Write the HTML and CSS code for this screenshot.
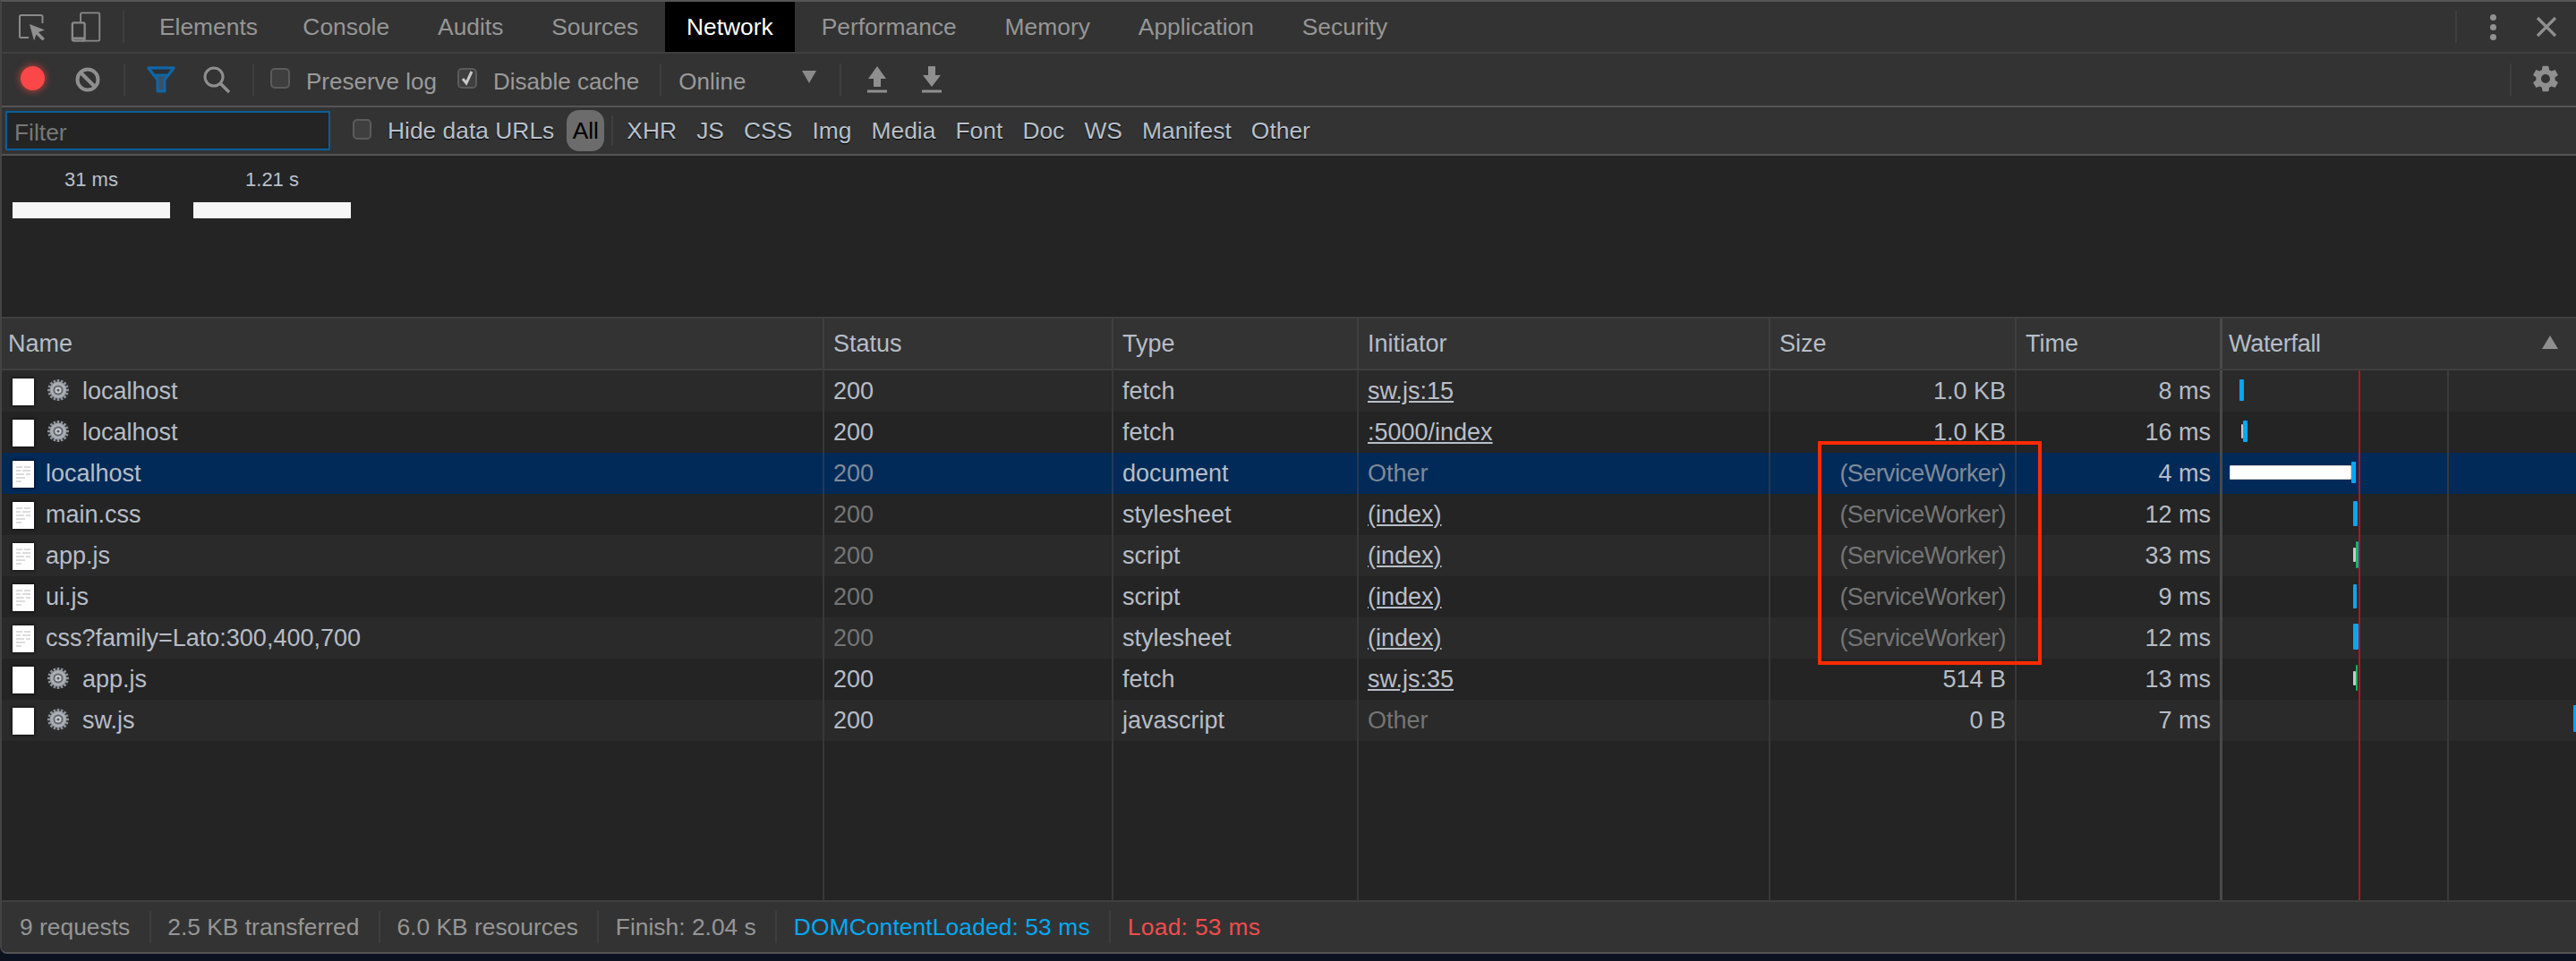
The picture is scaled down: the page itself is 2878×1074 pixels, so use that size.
FILE: index.html
```html
<!DOCTYPE html>
<html lang="en">
<head>
<meta charset="utf-8">
<title>Network</title>
<link rel="stylesheet" href="styles.css">
</head>
<body>
<svg class="defs" width="0" height="0" aria-hidden="true">
  <defs>
    <radialGradient id="metal" cx="50%" cy="35%" r="70%">
      <stop offset="0" stop-color="#d8dde2"/>
      <stop offset="1" stop-color="#6f757b"/>
    </radialGradient>
    <symbol id="gearlet" viewBox="0 0 26 26">
      <g fill="url(#metal)">
        <circle cx="13" cy="13" r="9.4"/>
        <g stroke="#8d9399" stroke-width="2.6">
          <path d="M13 1v24M1 13h24M4.5 4.5l17 17M21.5 4.5l-17 17"/>
          <path d="M8.4 2l9.2 22M17.600 2L8.400 24M2 8.400l22 9.200M24 8.400L2 17.600"/>
        </g>
        <circle cx="13" cy="13" r="8.6" fill="#a9afb5"/>
        <circle cx="13" cy="13" r="5.6" fill="#63686d"/>
        <circle cx="13" cy="13" r="3.6" fill="#c9cdd1"/>
        <circle cx="13" cy="13" r="1.6" fill="#55595d"/>
      </g>
    </symbol>
    <symbol id="doclines" viewBox="0 0 24 30">
      <path d="M4 7h7M13 7h7M4 11h5M11 11h9M4 15h9M15 15h5M4 19h10M4 23h6" stroke="#dcdcdc" stroke-width="2" fill="none"/>
    </symbol>
  </defs>
</svg>
<main class="devtools">
  <nav class="tabbar">
    <span class="tb-icon inspect">
      <svg width="30" height="30" viewBox="0 0 30 30"><path d="M11 27H2.500A1.500 1.500 0 0 1 1 25.500V3.500A1.500 1.500 0 0 1 2.500 2H25a1.500 1.500 0 0 1 1.500 1.500V11" fill="none" stroke="#8a8a8a" stroke-width="2"/><path d="M12 12l17 6.500-7 2.500 7 7-2.500 2.500-7-7-2.500 7z" fill="#8f8f8f"/></svg>
    </span>
    <span class="tb-icon device">
      <svg width="35" height="36" viewBox="0 0 38 38"><path d="M12 13V3.500A1.500 1.500 0 0 1 13.500 2h20A1.500 1.500 0 0 1 35 3.500v31a1.500 1.500 0 0 1-1.500 1.500H14" fill="none" stroke="#8a8a8a" stroke-width="2"/><rect x="2" y="14" width="15" height="22" rx="2" fill="none" stroke="#8a8a8a" stroke-width="2.500"/><path d="M2 33h15" stroke="#8a8a8a" stroke-width="3"/></svg>
    </span>
    <span class="sep tab-sep"></span>
    <a class="tab tab-first">Elements</a>
    <a class="tab">Console</a>
    <a class="tab">Audits</a>
    <a class="tab">Sources</a>
    <a class="tab active">Network</a>
    <a class="tab">Performance</a>
    <a class="tab">Memory</a>
    <a class="tab">Application</a>
    <a class="tab">Security</a>
    <span class="sep tab-end-sep"></span>
    <span class="dots"><i></i><i></i><i></i></span>
    <svg class="close" width="24" height="24" viewBox="0 0 24 24"><path d="M2 2l20 20M22 2L2 22" stroke="#8f8f8f" stroke-width="3.200"/></svg>
  </nav>

  <section class="toolbar">
    <span class="btn"><span class="record"></span></span>
    <span class="btn">
      <svg width="30" height="30" viewBox="0 0 30 30"><circle cx="15" cy="15" r="11.500" fill="none" stroke="#8f8f8f" stroke-width="4"/><path d="M7 7l16 16" stroke="#8f8f8f" stroke-width="4"/></svg>
    </span>
    <span class="sep"></span>
    <span class="btn">
      <svg width="32" height="30" viewBox="0 0 32 30"><path d="M2 2h28L20 15v13h-8V15z" fill="#3c4f60" stroke="#0f66a8" stroke-width="3" stroke-linejoin="round"/><path d="M2 2h28l-6 8H8z" fill="#2c2f33" stroke="#0f66a8" stroke-width="3" stroke-linejoin="round"/></svg>
    </span>
    <span class="btn">
      <svg width="32" height="32" viewBox="0 0 32 32"><circle cx="13" cy="13" r="10" fill="none" stroke="#8f8f8f" stroke-width="3"/><path d="M20 20l10 10" stroke="#8f8f8f" stroke-width="3.500"/></svg>
    </span>
    <span class="sep"></span>
    <label class="check first-check"><span class="box"></span>Preserve log</label>
    <label class="check"><span class="box"><svg width="16" height="18" viewBox="0 0 16 18"><path d="M3 10l4 5 6-13" fill="none" stroke="#c8c8c8" stroke-width="3"/></svg></span>Disable cache</label>
    <span class="sep"></span>
    <span class="select">Online<span class="caret"></span></span>
    <span class="sep"></span>
    <span class="btn small">
      <svg width="22" height="30" viewBox="0 0 22 30"><path d="M11 0l10 14h-6v9H7v-9H1z" fill="#8f8f8f"/><path d="M0 28h22" stroke="#8f8f8f" stroke-width="3"/></svg>
    </span>
    <span class="btn small">
      <svg width="22" height="30" viewBox="0 0 22 30"><path d="M7 0h8v10h6L11 23 1 10h6z" fill="#8f8f8f"/><path d="M0 28h22" stroke="#8f8f8f" stroke-width="3"/></svg>
    </span>
    <span class="toolbar-end">
      <span class="sep"></span>
      <svg class="gear" width="34" height="34" viewBox="0 0 24 24"><path fill="#8f8f8f" d="M19.430 12.980c.04-.32.070-.640.070-.980s-.030-.660-.070-.980l2.110-1.650c.190-.150.240-.420.120-.640l-2-3.460c-.120-.220-.390-.300-.610-.220l-2.490 1c-.520-.400-1.080-.730-1.690-.980l-.380-2.650A.488.488 0 0 0 14 2h-4c-.250 0-.460.180-.490.420l-.380 2.650c-.610.250-1.170.590-1.690.980l-2.490-1c-.230-.090-.490 0-.610.220l-2 3.460c-.130.220-.070.490.120.640l2.110 1.650c-.040.320-.070.650-.070.980s.030.660.070.980l-2.110 1.650c-.190.150-.240.420-.120.640l2 3.460c.120.220.390.300.610.220l2.490-1c.520.400 1.080.730 1.690.980l.380 2.650c.030.240.240.420.490.420h4c.250 0 .460-.180.490-.420l.380-2.650c.610-.250 1.170-.590 1.690-.980l2.490 1c.230.090.490 0 .610-.220l2-3.460c.120-.220.070-.490-.120-.640l-2.110-1.650zM12 15.500c-1.930 0-3.500-1.570-3.500-3.500s1.570-3.500 3.500-3.500 3.500 1.570 3.500 3.500-1.570 3.500-3.500 3.500z"/></svg>
    </span>
  </section>

  <section class="filterbar">
    <input class="filter-input" type="text" placeholder="Filter">
    <label class="check hide-data"><span class="box"></span>Hide data URLs</label>
    <span class="pill">All</span>
    <span class="sep pill-sep"></span>
    <span class="ftype">XHR</span>
    <span class="ftype">JS</span>
    <span class="ftype">CSS</span>
    <span class="ftype">Img</span>
    <span class="ftype">Media</span>
    <span class="ftype">Font</span>
    <span class="ftype">Doc</span>
    <span class="ftype">WS</span>
    <span class="ftype">Manifest</span>
    <span class="ftype">Other</span>
  </section>

  <section class="overview">
    <div class="ov-item"><span>31 ms</span><i></i></div>
    <div class="ov-item"><span>1.21 s</span><i></i></div>
  </section>

  <section class="table">
    <div class="row head">
      <div class="cell">Name</div>
      <div class="cell">Status</div>
      <div class="cell">Type</div>
      <div class="cell">Initiator</div>
      <div class="cell">Size</div>
      <div class="cell">Time</div>
      <div class="cell wf-head">Waterfall<span class="sort"></span></div>
    </div>
    <div class="body">
      <div class="row odd">
        <div class="cell"><span class="doc"></span><svg class="cog" width="26" height="26"><use href="#gearlet"/></svg>localhost</div>
        <div class="cell">200</div><div class="cell">fetch</div><div class="cell"><u>sw.js:15</u></div>
        <div class="cell num">1.0 KB</div><div class="cell num">8 ms</div>
        <div class="cell wf"><b class="bar blue" style="left:19px;width:5px;top:10px;height:24px"></b></div>
      </div>
      <div class="row">
        <div class="cell"><span class="doc"></span><svg class="cog" width="26" height="26"><use href="#gearlet"/></svg>localhost</div>
        <div class="cell">200</div><div class="cell">fetch</div><div class="cell"><u>:5000/index</u></div>
        <div class="cell num">1.0 KB</div><div class="cell num">16 ms</div>
        <div class="cell wf"><b class="bar grey" style="left:21px;width:2px;top:14px;height:16px"></b><b class="bar blue" style="left:23px;width:5px;top:10px;height:24px"></b></div>
      </div>
      <div class="row selected">
        <div class="cell"><span class="doc lines"><svg width="24" height="30"><use href="#doclines"/></svg></span>localhost</div>
        <div class="cell dim">200</div><div class="cell">document</div><div class="cell dim">Other</div>
        <div class="cell num dim">(ServiceWorker)</div><div class="cell num">4 ms</div>
        <div class="cell wf"><b class="bar white" style="left:8px;width:136px;top:14px;height:16px"></b><b class="bar blue" style="left:144px;width:5px;top:10px;height:24px"></b></div>
      </div>
      <div class="row">
        <div class="cell"><span class="doc lines"><svg width="24" height="30"><use href="#doclines"/></svg></span>main.css</div>
        <div class="cell dim">200</div><div class="cell">stylesheet</div><div class="cell"><u>(index)</u></div>
        <div class="cell num dim">(ServiceWorker)</div><div class="cell num">12 ms</div>
        <div class="cell wf"><b class="bar blue" style="left:146px;width:5px;top:8px;height:28px"></b></div>
      </div>
      <div class="row odd">
        <div class="cell"><span class="doc lines"><svg width="24" height="30"><use href="#doclines"/></svg></span>app.js</div>
        <div class="cell dim">200</div><div class="cell">script</div><div class="cell"><u>(index)</u></div>
        <div class="cell num dim">(ServiceWorker)</div><div class="cell num">33 ms</div>
        <div class="cell wf"><b class="bar grey" style="left:146px;width:3px;top:14px;height:16px"></b><b class="bar green" style="left:149px;width:2px;top:7px;height:30px"></b><b class="bar blue" style="left:151px;width:3px;top:7px;height:30px"></b></div>
      </div>
      <div class="row">
        <div class="cell"><span class="doc lines"><svg width="24" height="30"><use href="#doclines"/></svg></span>ui.js</div>
        <div class="cell dim">200</div><div class="cell">script</div><div class="cell"><u>(index)</u></div>
        <div class="cell num dim">(ServiceWorker)</div><div class="cell num">9 ms</div>
        <div class="cell wf"><b class="bar blue" style="left:146px;width:4px;top:9px;height:27px"></b></div>
      </div>
      <div class="row odd">
        <div class="cell"><span class="doc lines"><svg width="24" height="30"><use href="#doclines"/></svg></span>css?family=Lato:300,400,700</div>
        <div class="cell dim">200</div><div class="cell">stylesheet</div><div class="cell"><u>(index)</u></div>
        <div class="cell num dim">(ServiceWorker)</div><div class="cell num">12 ms</div>
        <div class="cell wf"><b class="bar blue" style="left:146px;width:6px;top:7px;height:29px"></b></div>
      </div>
      <div class="row">
        <div class="cell"><span class="doc"></span><svg class="cog" width="26" height="26"><use href="#gearlet"/></svg>app.js</div>
        <div class="cell">200</div><div class="cell">fetch</div><div class="cell"><u>sw.js:35</u></div>
        <div class="cell num">514 B</div><div class="cell num">13 ms</div>
        <div class="cell wf"><b class="bar grey" style="left:146px;width:3px;top:14px;height:16px"></b><b class="bar green" style="left:149px;width:2px;top:7px;height:29px"></b></div>
      </div>
      <div class="row odd">
        <div class="cell"><span class="doc"></span><svg class="cog" width="26" height="26"><use href="#gearlet"/></svg>sw.js</div>
        <div class="cell">200</div><div class="cell">javascript</div><div class="cell dim">Other</div>
        <div class="cell num">0 B</div><div class="cell num">7 ms</div>
        <div class="cell wf"><b class="bar blue" style="left:392px;width:4px;top:6px;height:30px"></b></div>
      </div>
      <div class="row filler">
        <div class="cell"></div><div class="cell"></div><div class="cell"></div><div class="cell"></div><div class="cell"></div><div class="cell"></div><div class="cell"></div>
      </div>
      <span class="gridline"></span>
      <span class="loadline"></span>
      <span class="highlight"></span>
    </div>
  </section>

  <footer class="status">
    <span>9 requests</span>
    <span>2.5 KB transferred</span>
    <span>6.0 KB resources</span>
    <span>Finish: 2.04 s</span>
    <span class="dcl">DOMContentLoaded: 53 ms</span>
    <span class="load">Load: 53 ms</span>
  </footer>
</main>
</body>
</html>
```

FILE: styles.css
```css
* { box-sizing: border-box; }
html, body { margin: 0; height: 100%; }
body {
  background: #0c1220;
  font-family: "Liberation Sans", Arial, sans-serif;
  font-size: 26.4px;
  overflow: hidden;
}
.defs { position: absolute; }

.devtools {
  width: 2878px;
  height: 1066px;
  display: flex;
  flex-direction: column;
  background: #242424;
  border-top: 2px solid #555;
  border-left: 2px solid #444;
  border-bottom: 2px solid #555;
  border-bottom-left-radius: 8px;
  overflow: hidden;
}

/* Tabs */
.tabbar {
  height: 58px;
  flex: none;
  display: flex;
  align-items: center;
  background: #333;
  border-bottom: 2px solid #3f3f3f;
  color: #969696;
}
.tb-icon { display: flex; flex: none; }
.inspect { margin-left: 19px; }
.device { margin-left: 28px; }
.sep {
  display: block;
  flex: none;
  width: 2px;
  height: 36px;
  background: #3e3e3e;
  margin: 0 9px;
}
.tab-sep { margin: 0 12px 0 23px; }
.tab {
  display: flex;
  align-items: center;
  height: 56px;
  padding: 0 26.950px;
}
.tab-first { margin-right: -3.500px; }
.tab.active { background: #000; color: #fff; margin: 0 2.950px; padding: 0 24px; }
.tab-end-sep { margin: 0 0 0 auto; }
.dots {
  display: flex;
  flex-direction: column;
  gap: 4px;
  margin-left: 36.500px;
}
.dots i { display: block; width: 7px; height: 7px; border-radius: 50%; background: #919191; }
.close { margin: 0 21px 0 44.500px; }

/* Toolbar */
.toolbar {
  height: 60px;
  flex: none;
  display: flex;
  align-items: center;
  padding-left: 3px;
  background: #333;
  border-bottom: 2px solid #555;
  color: #9a9a9a;
  font-size: 26px;
}
.btn { display: flex; justify-content: center; align-items: center; width: 62px; flex: none; }
.btn.small { width: 61px; }
.record {
  width: 27px;
  height: 27px;
  border-radius: 50%;
  background: #fb4747;
  box-shadow: 0 0 7px 2px rgba(255, 70, 70, .5);
  margin-top: -4px;
}
.check { display: flex; align-items: center; gap: 18px; margin-right: 23px; padding-top: 4px; }
.first-check { margin-left: 9px; }
.box {
  display: flex;
  align-items: center;
  justify-content: center;
  width: 22px;
  height: 23px;
  border-radius: 5px;
  background: #3f3f3f;
  border: 2px solid #5b5b5b;
  margin-top: -8px;
}
.toolbar .check + .sep { margin-left: 0; }
.select {
  display: flex;
  align-items: center;
  width: 154px;
  margin-left: 10px;
  margin-right: 17px;
  padding-top: 4px;
  justify-content: space-between;
}
.caret {
  width: 0;
  height: 0;
  border-left: 8px solid transparent;
  border-right: 8px solid transparent;
  border-top: 14px solid #8a8a8a;
  margin-top: -10px;
}
.toolbar-end { margin-left: auto; display: flex; align-items: center; }
.toolbar-end .sep { margin: 0; }
.gear { margin: -2px 17px 0 21px; }

/* Filter bar */
.filterbar {
  height: 54px;
  flex: none;
  display: flex;
  align-items: center;
  padding-left: 4px;
  background: #333;
  border-bottom: 2px solid #555;
  color: #b9c1cc;
  text-shadow: 0 1px 1px #000;
}
.filter-input {
  width: 363px;
  height: 44px;
  flex: none;
  margin-right: 25px;
  padding: 4px 8px 0;
  background: #242424;
  border: 2px solid #0a5f9c;
  border-radius: 0;
  outline: none;
  font: inherit;
  color: #ccc;
}
.filter-input::placeholder { color: #777; opacity: 1; }
.filterbar .check { padding-top: 0; }
.hide-data { margin-right: 14px; }
.hide-data .box { margin-top: -4px; width: 21px; }
.pill {
  display: flex;
  align-items: center;
  justify-content: center;
  width: 42px;
  height: 46px;
  border-radius: 14px;
  background: #6c6c6c;
  color: #000;
  text-shadow: none;
}
.pill-sep { height: 34px; margin: 0 15px 0 8px; }
.ftype { margin-right: 22.100px; }

/* Overview */
.overview {
  height: 180px;
  flex: none;
  display: flex;
  gap: 26px;
  padding: 13px 0 0 12px;
  background: #242424;
}
.ov-item { width: 176px; display: flex; flex-direction: column; align-items: center; gap: 12px; }
.ov-item span { font-size: 22px; line-height: 27px; color: #b9c1cc; }
.ov-item i { display: block; width: 176px; height: 18px; background: #f5f5f5; }

/* Table */
.table { flex: 1; display: flex; flex-direction: column; min-height: 0; }
.row {
  display: grid;
  grid-template-columns: 919px 323px 274px 460px 275px 230px 1fr;
  height: 46px;
  color: #b6bdc7;
  font-size: 27px;
}
.row.odd { background: #2a2a2a; }
.row.selected { background: #012a58; }
.cell {
  display: flex;
  align-items: center;
  min-width: 0;
  padding: 0 10px;
  border-right: 2px solid #383838;
  white-space: nowrap;
}
.row > .cell:first-child { padding-left: 3px; }
.selected .cell { border-right-color: #23395a; }
.cell:last-child { border-right: 0; }
.row > .cell:nth-child(6) { border-right: 3px solid #4a4a4a; }
.head {
  height: 60px;
  flex: none;
  background: #333;
  border-top: 2px solid #3f3f3f;
  border-bottom: 2px solid #3f3f3f;
}
.head > .cell:first-child { padding-left: 7px; }
.head .cell { border-right-color: #3f3f3f; }
.wf-head { position: relative; padding-left: 7px; letter-spacing: -.3px; }
.sort {
  position: absolute;
  right: 20px;
  top: 19px;
  width: 0;
  height: 0;
  border-left: 9px solid transparent;
  border-right: 9px solid transparent;
  border-bottom: 15px solid #8f8f8f;
}
.body { position: relative; flex: 1; display: flex; flex-direction: column; min-height: 0; }
.filler { flex: 1; height: auto; }
.num { justify-content: flex-end; }
.dim { color: #757575; }
.num.dim { letter-spacing: -.6px; }
.selected .dim { color: #7f8a99; }
u { color: #b9bfc8; }
.doc {
  flex: none;
  display: block;
  width: 24px;
  height: 30px;
  margin: 1px 13px 0 9px;
  background: #fff;
  box-shadow: 0 0 3px 1px rgba(0, 0, 0, .55);
}
.doc svg { display: block; }
.cog { flex: none; margin: -3px 14px 0 1px; }
.wf { position: relative; padding: 0; }
.bar { position: absolute; display: block; border-radius: 1px; }
.blue { background: #08a6f5; }
.grey { background: #c8c8c8; }
.green { background: #13b65d; }
.white { background: #fff; border: 1px solid #d5d5d5; }
.gridline, .loadline, .highlight { position: absolute; top: 0; pointer-events: none; }
.gridline { left: 2732px; bottom: 0; width: 2px; background: #3a3a3a; }
.loadline { left: 2633px; bottom: 0; width: 2px; background: #b0171c; }
.highlight {
  left: 2029px;
  top: 79px;
  width: 250px;
  height: 250px;
  border: 4px solid #ff2b00;
}

/* Status */
.status {
  height: 58px;
  flex: none;
  display: flex;
  align-items: center;
  padding-left: 20px;
  background: #333;
  border-top: 2px solid #3f3f3f;
  color: #969696;
}
.status span { display: block; padding-right: 21.500px; margin-right: 20.500px; box-shadow: 2px 0 0 0 #3e3e3e; line-height: 36px; }
.status .dcl { color: #03a9f4; letter-spacing: .1px; }
.status .load { color: #f24c4c; box-shadow: none; letter-spacing: .3px; }
```
